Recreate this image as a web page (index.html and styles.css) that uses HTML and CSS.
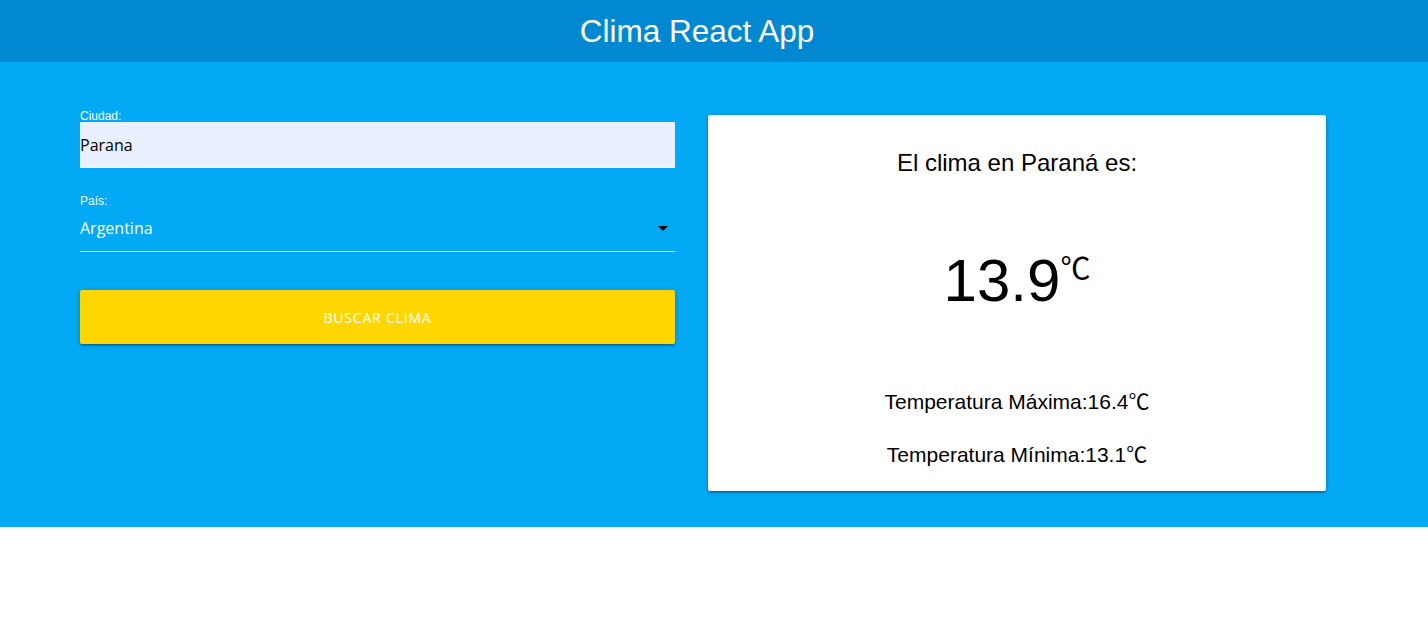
FILE: index.html
```html
<!DOCTYPE html>
<html lang="es">
<head>
<meta charset="utf-8">
<title>Clima React App</title>
<link rel="stylesheet" href="styles.css">
</head>
<body>
<header class="topbar">
  <h1 class="brand">Clima React App</h1>
</header>
<main class="content">
  <form class="form">
    <div class="field">
      <label class="field-label" for="ciudad">Ciudad:</label>
      <input class="text-input" id="ciudad" type="text" value="Parana">
    </div>
    <div class="field field-select">
      <span class="field-label">País:</span>
      <div class="select">
        <span class="select-value">Argentina</span>
        <svg class="select-caret" width="24" height="24" viewBox="0 0 24 24"><path d="M7 10l5 5 5-5z" fill="#000"/></svg>
      </div>
    </div>
    <button class="btn" type="button">Buscar clima</button>
  </form>
  <section class="card">
    <h2 class="card-title">El clima en Paraná es:</h2>
    <p class="temp">13.9<span class="temp-unit">℃</span></p>
    <p class="minmax minmax-max">Temperatura Máxima:16.4℃</p>
    <p class="minmax minmax-min">Temperatura Mínima:13.1℃</p>
  </section>
</main>
</body>
</html>
```

FILE: styles.css
```css
html, body {
  margin: 0;
  padding: 0;
  background: #fff;
  font-family: "Liberation Sans", Arial, "Noto Sans CJK SC", sans-serif;
}

.topbar {
  height: 62px;
  background: #0288d1;
  display: flex;
  justify-content: center;
  padding-right: 34px;
}

.brand {
  margin: 0;
  font-weight: normal;
  font-size: 31.5px;
  line-height: 62px;
  color: #fff;
}

.content {
  background: #03a9f4;
  display: grid;
  grid-template-columns: 595px 618px;
  column-gap: 33px;
  align-items: start;
  padding: 48px 102px 36px 80px;
}

.form {
  display: flex;
  flex-direction: column;
}

.field {
  display: flex;
  flex-direction: column;
}

.field-select {
  margin-top: 27px;
}

.field-label {
  font-family: "Liberation Sans", Arial, sans-serif;
  font-size: 12px;
  line-height: 12px;
  height: 12px;
  color: #fff;
}

.text-input {
  display: block;
  box-sizing: content-box;
  height: 45px;
  margin: 0;
  padding: 0;
  border: none;
  border-bottom: 1px solid #fff;
  background: #e8f0fe;
  font-family: "Open Sans", sans-serif;
  font-size: 16px;
  color: #000;
  outline: none;
}

.select {
  height: 42px;
  padding-bottom: 2px;
  border-bottom: 1px solid #fff;
  display: flex;
  align-items: center;
  justify-content: space-between;
}

.select-value {
  font-family: "Open Sans", sans-serif;
  font-size: 16px;
  line-height: 42px;
  color: #fff;
}

.select-caret {
  display: block;
}

.btn {
  margin-top: 38px;
  height: 54px;
  border: none;
  border-radius: 2px;
  background: #ffd600;
  color: #fff;
  font-family: "Open Sans", sans-serif;
  font-size: 14px;
  letter-spacing: 0.8px;
  text-transform: uppercase;
  box-shadow: 0 2px 2px 0 rgba(0,0,0,0.14), 0 3px 1px -2px rgba(0,0,0,0.12), 0 1px 5px 0 rgba(0,0,0,0.2);
  cursor: pointer;
}

.card {
  margin-top: 5px;
  background: #fff;
  border-radius: 2px;
  box-shadow: 0 2px 2px 0 rgba(0,0,0,0.14), 0 3px 1px -2px rgba(0,0,0,0.12), 0 1px 5px 0 rgba(0,0,0,0.2);
  padding: 33px 0 24px;
  text-align: center;
  color: #000;
}

.card-title {
  margin: 0;
  font-weight: normal;
  font-size: 24px;
  line-height: 30px;
}

.temp {
  margin: 73px 0 0;
  font-size: 60px;
  line-height: 60px;
}

.temp-unit {
  font-size: 30px;
  line-height: 30px;
  vertical-align: 22px;
}

.minmax {
  margin: 0;
  font-size: 21px;
  line-height: 24px;
}

.minmax-max {
  margin-top: 79px;
}

.minmax-min {
  margin-top: 29px;
}
```
